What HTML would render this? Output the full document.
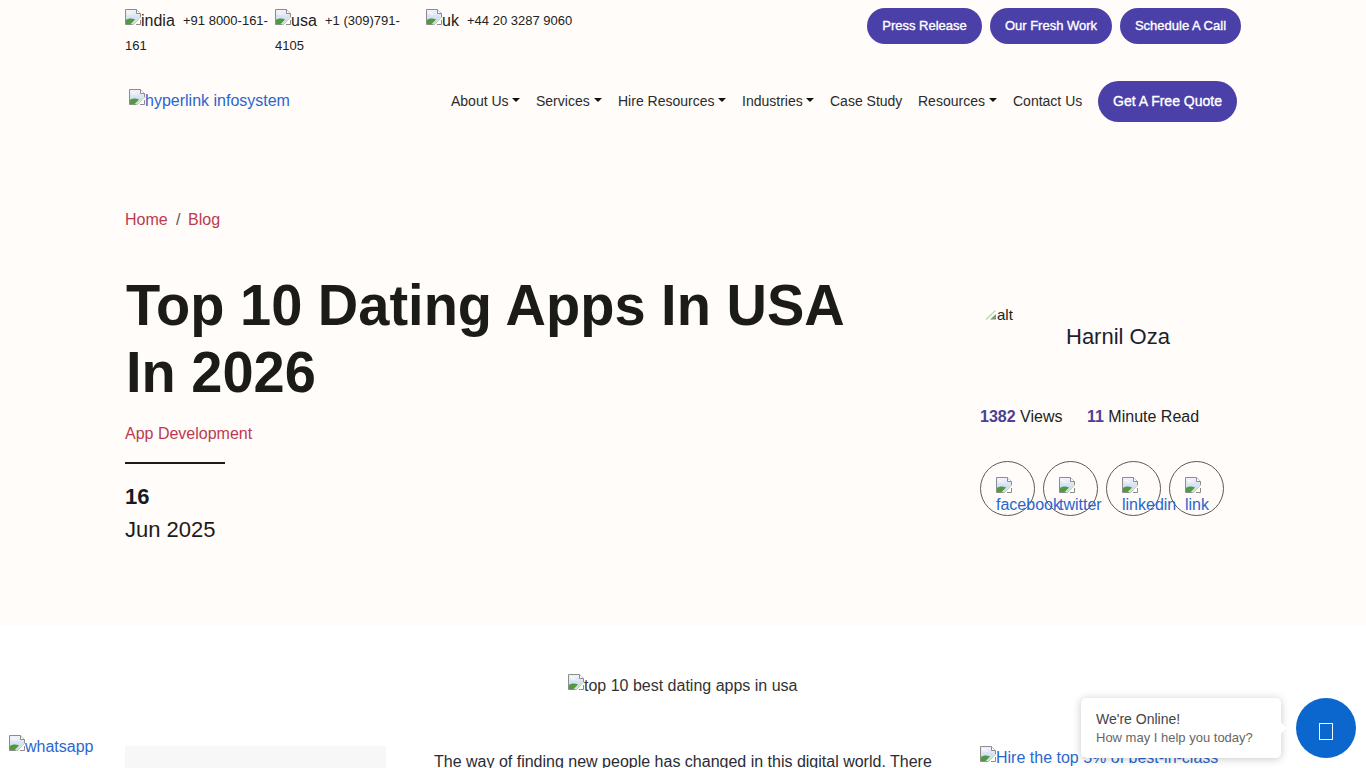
<!DOCTYPE html>
<html><head><meta charset="utf-8">
<style>
html,body{margin:0;padding:0;}
body{width:1366px;height:768px;overflow:hidden;position:relative;background:#fff;font-family:"Liberation Sans",sans-serif;color:#212529;}
.hero{position:absolute;left:0;top:0;width:1366px;height:626px;background:#fffcf9;}
.t{position:absolute;white-space:nowrap;line-height:1;}
.bi{position:absolute;width:16px;height:16px;}
.btn{position:absolute;background:#4a40a8;color:#fff;border-radius:20px;text-align:center;white-space:nowrap;-webkit-text-stroke:0.35px #fff;}
.nav{font-size:14px;color:#2b2b2b;}
.caret{position:absolute;width:0;height:0;border-top:4px solid #111;border-left:4px solid transparent;border-right:4px solid transparent;}
.red{color:#bc3a50;}
.blue{color:#2a66cf;}
.ttl{position:absolute;left:126px;white-space:nowrap;font-size:56px;font-weight:bold;line-height:67.2px;color:#1b1b18;transform:scaleY(1.03);transform-origin:0 54px;}
.circ{position:absolute;width:53px;height:53px;border:1px solid #5a5a5a;border-radius:50%;top:461px;}
</style></head>
<body>
<svg width="0" height="0" style="position:absolute">
<defs>
<linearGradient id="sky" x1="0" y1="0" x2="0" y2="1"><stop offset="0" stop-color="#f4f4fb"/><stop offset="1" stop-color="#bcd0ee"/></linearGradient>

</defs></svg>

<div class="hero"></div>

<!-- top bar -->
<svg class="bi" style="left:125px;top:9px" viewBox="0 0 16 16"><path d="M0.5 0.5H11.5L15.5 4.5V8.5L8.5 15.5H0.5Z" fill="url(#sky)" stroke="#8c8c8c"/>
<path d="M2 3.5H6M3 5H8" stroke="#fff" stroke-width="0.8" opacity="0.8"/>
<path d="M1 15V11C3 9.5 6.5 9 10 10.5L5.5 15Z" fill="#4f9a3c"/>
<path d="M7.5 15.5L15.5 8" stroke="#d6f0c4" stroke-width="1.2"/>
<path d="M11 15.5H15.5V11" fill="none" stroke="#8c8c8c"/>
<path d="M11.5 0.5V4.5H15.5" fill="#fff" stroke="#8c8c8c"/></svg>
<div class="t" style="left:141px;top:13px;font-size:16px;color:#222">india</div>
<div class="t" style="left:183px;top:14px;font-size:13px;color:#222">+91 8000-161-</div>
<div class="t" style="left:125px;top:39px;font-size:13px;color:#222">161</div>

<svg class="bi" style="left:275px;top:9px" viewBox="0 0 16 16"><path d="M0.5 0.5H11.5L15.5 4.5V8.5L8.5 15.5H0.5Z" fill="url(#sky)" stroke="#8c8c8c"/>
<path d="M2 3.5H6M3 5H8" stroke="#fff" stroke-width="0.8" opacity="0.8"/>
<path d="M1 15V11C3 9.5 6.5 9 10 10.5L5.5 15Z" fill="#4f9a3c"/>
<path d="M7.5 15.5L15.5 8" stroke="#d6f0c4" stroke-width="1.2"/>
<path d="M11 15.5H15.5V11" fill="none" stroke="#8c8c8c"/>
<path d="M11.5 0.5V4.5H15.5" fill="#fff" stroke="#8c8c8c"/></svg>
<div class="t" style="left:291px;top:13px;font-size:16px;color:#222">usa</div>
<div class="t" style="left:325px;top:14px;font-size:13px;color:#222">+1 (309)791-</div>
<div class="t" style="left:275px;top:39px;font-size:13px;color:#222">4105</div>

<svg class="bi" style="left:426px;top:9px" viewBox="0 0 16 16"><path d="M0.5 0.5H11.5L15.5 4.5V8.5L8.5 15.5H0.5Z" fill="url(#sky)" stroke="#8c8c8c"/>
<path d="M2 3.5H6M3 5H8" stroke="#fff" stroke-width="0.8" opacity="0.8"/>
<path d="M1 15V11C3 9.5 6.5 9 10 10.5L5.5 15Z" fill="#4f9a3c"/>
<path d="M7.5 15.5L15.5 8" stroke="#d6f0c4" stroke-width="1.2"/>
<path d="M11 15.5H15.5V11" fill="none" stroke="#8c8c8c"/>
<path d="M11.5 0.5V4.5H15.5" fill="#fff" stroke="#8c8c8c"/></svg>
<div class="t" style="left:442px;top:13px;font-size:16px;color:#222">uk</div>
<div class="t" style="left:467px;top:14px;font-size:13px;color:#222">+44 20 3287 9060</div>

<div class="btn" style="left:867px;top:8px;width:115px;height:36px;line-height:36px;font-size:13px">Press Release</div>
<div class="btn" style="left:990px;top:8px;width:122px;height:36px;line-height:36px;font-size:13px">Our Fresh Work</div>
<div class="btn" style="left:1120px;top:8px;width:121px;height:36px;line-height:36px;font-size:13px">Schedule A Call</div>

<!-- nav -->
<svg class="bi" style="left:129px;top:89px" viewBox="0 0 16 16"><path d="M0.5 0.5H11.5L15.5 4.5V8.5L8.5 15.5H0.5Z" fill="url(#sky)" stroke="#8c8c8c"/>
<path d="M2 3.5H6M3 5H8" stroke="#fff" stroke-width="0.8" opacity="0.8"/>
<path d="M1 15V11C3 9.5 6.5 9 10 10.5L5.5 15Z" fill="#4f9a3c"/>
<path d="M7.5 15.5L15.5 8" stroke="#d6f0c4" stroke-width="1.2"/>
<path d="M11 15.5H15.5V11" fill="none" stroke="#8c8c8c"/>
<path d="M11.5 0.5V4.5H15.5" fill="#fff" stroke="#8c8c8c"/></svg>
<div class="t blue" style="left:145px;top:93px;font-size:16px">hyperlink infosystem</div>

<div class="t nav" style="left:451px;top:94px">About Us</div><div class="caret" style="left:512px;top:98px"></div>
<div class="t nav" style="left:536px;top:94px">Services</div><div class="caret" style="left:594px;top:98px"></div>
<div class="t nav" style="left:618px;top:94px">Hire Resources</div><div class="caret" style="left:718px;top:98px"></div>
<div class="t nav" style="left:742px;top:94px">Industries</div><div class="caret" style="left:806px;top:98px"></div>
<div class="t nav" style="left:830px;top:94px">Case Study</div>
<div class="t nav" style="left:918px;top:94px">Resources</div><div class="caret" style="left:989px;top:98px"></div>
<div class="t nav" style="left:1013px;top:94px">Contact Us</div>
<div class="btn" style="left:1098px;top:81px;width:139px;height:41px;line-height:41px;font-size:14px;border-radius:21px">Get A Free Quote</div>

<!-- breadcrumb -->
<div class="t red" style="left:125px;top:212px;font-size:16px">Home</div>
<div class="t" style="left:176px;top:212px;font-size:16px;color:#555">/</div>
<div class="t red" style="left:188px;top:212px;font-size:16px">Blog</div>

<!-- title -->
<div class="ttl" style="top:272px">Top 10 Dating Apps In USA</div>
<div class="ttl" style="top:339.2px">In 2026</div>
<div class="t red" style="left:125px;top:426px;font-size:16px">App Development</div>
<div style="position:absolute;left:125px;top:462px;width:100px;height:2px;background:#1b1b1b"></div>
<div class="t" style="left:125px;top:486px;font-size:22px;font-weight:bold;color:#161a22">16</div>
<div class="t" style="left:125px;top:519px;font-size:22px;color:#1b1b1b">Jun 2025</div>

<!-- author -->
<svg style="position:absolute;left:984px;top:307px" width="14" height="14"><path d="M2 12.5L11.5 3.5" stroke="#b9d8b0" stroke-width="1.3"/><path d="M6 12.5L12 7V12.5Z" fill="#7a9a78"/></svg>
<div class="t" style="left:997px;top:307px;font-size:15px;color:#222">alt</div>
<div class="t" style="left:1066px;top:326px;font-size:22px;color:#1c1f2a">Harnil Oza</div>

<div class="t" style="left:980px;top:409px;font-size:16px;color:#222"><b style="color:#4a4096">1382</b> Views</div>
<div class="t" style="left:1087px;top:409px;font-size:16px;color:#222"><b style="color:#4a4096">11</b> Minute Read</div>

<div class="circ" style="left:980px"></div>
<div class="circ" style="left:1043px"></div>
<div class="circ" style="left:1106px"></div>
<div class="circ" style="left:1169px"></div>
<svg class="bi" style="left:996px;top:477px" viewBox="0 0 16 16"><path d="M0.5 0.5H11.5L15.5 4.5V8.5L8.5 15.5H0.5Z" fill="url(#sky)" stroke="#8c8c8c"/>
<path d="M2 3.5H6M3 5H8" stroke="#fff" stroke-width="0.8" opacity="0.8"/>
<path d="M1 15V11C3 9.5 6.5 9 10 10.5L5.5 15Z" fill="#4f9a3c"/>
<path d="M7.5 15.5L15.5 8" stroke="#d6f0c4" stroke-width="1.2"/>
<path d="M11 15.5H15.5V11" fill="none" stroke="#8c8c8c"/>
<path d="M11.5 0.5V4.5H15.5" fill="#fff" stroke="#8c8c8c"/></svg>
<svg class="bi" style="left:1059px;top:477px" viewBox="0 0 16 16"><path d="M0.5 0.5H11.5L15.5 4.5V8.5L8.5 15.5H0.5Z" fill="url(#sky)" stroke="#8c8c8c"/>
<path d="M2 3.5H6M3 5H8" stroke="#fff" stroke-width="0.8" opacity="0.8"/>
<path d="M1 15V11C3 9.5 6.5 9 10 10.5L5.5 15Z" fill="#4f9a3c"/>
<path d="M7.5 15.5L15.5 8" stroke="#d6f0c4" stroke-width="1.2"/>
<path d="M11 15.5H15.5V11" fill="none" stroke="#8c8c8c"/>
<path d="M11.5 0.5V4.5H15.5" fill="#fff" stroke="#8c8c8c"/></svg>
<svg class="bi" style="left:1122px;top:477px" viewBox="0 0 16 16"><path d="M0.5 0.5H11.5L15.5 4.5V8.5L8.5 15.5H0.5Z" fill="url(#sky)" stroke="#8c8c8c"/>
<path d="M2 3.5H6M3 5H8" stroke="#fff" stroke-width="0.8" opacity="0.8"/>
<path d="M1 15V11C3 9.5 6.5 9 10 10.5L5.5 15Z" fill="#4f9a3c"/>
<path d="M7.5 15.5L15.5 8" stroke="#d6f0c4" stroke-width="1.2"/>
<path d="M11 15.5H15.5V11" fill="none" stroke="#8c8c8c"/>
<path d="M11.5 0.5V4.5H15.5" fill="#fff" stroke="#8c8c8c"/></svg>
<svg class="bi" style="left:1185px;top:477px" viewBox="0 0 16 16"><path d="M0.5 0.5H11.5L15.5 4.5V8.5L8.5 15.5H0.5Z" fill="url(#sky)" stroke="#8c8c8c"/>
<path d="M2 3.5H6M3 5H8" stroke="#fff" stroke-width="0.8" opacity="0.8"/>
<path d="M1 15V11C3 9.5 6.5 9 10 10.5L5.5 15Z" fill="#4f9a3c"/>
<path d="M7.5 15.5L15.5 8" stroke="#d6f0c4" stroke-width="1.2"/>
<path d="M11 15.5H15.5V11" fill="none" stroke="#8c8c8c"/>
<path d="M11.5 0.5V4.5H15.5" fill="#fff" stroke="#8c8c8c"/></svg>
<div class="t blue" style="left:996px;top:497px;font-size:16px">facebook</div>
<div class="t blue" style="left:1059px;top:497px;font-size:16px">twitter</div>
<div class="t blue" style="left:1122px;top:497px;font-size:16px">linkedin</div>
<div class="t blue" style="left:1185px;top:497px;font-size:16px">link</div>

<!-- content -->
<svg class="bi" style="left:568px;top:674px" viewBox="0 0 16 16"><path d="M0.5 0.5H11.5L15.5 4.5V8.5L8.5 15.5H0.5Z" fill="url(#sky)" stroke="#8c8c8c"/>
<path d="M2 3.5H6M3 5H8" stroke="#fff" stroke-width="0.8" opacity="0.8"/>
<path d="M1 15V11C3 9.5 6.5 9 10 10.5L5.5 15Z" fill="#4f9a3c"/>
<path d="M7.5 15.5L15.5 8" stroke="#d6f0c4" stroke-width="1.2"/>
<path d="M11 15.5H15.5V11" fill="none" stroke="#8c8c8c"/>
<path d="M11.5 0.5V4.5H15.5" fill="#fff" stroke="#8c8c8c"/></svg>
<div class="t" style="left:584px;top:678px;font-size:16px;color:#333">top 10 best dating apps in usa</div>

<div style="position:absolute;left:125px;top:746px;width:261px;height:30px;background:#f7f7f7"></div>
<div class="t" style="left:434px;top:754px;font-size:16px;color:#2b2b33">The way of finding new people has changed in this digital world. There</div>

<svg class="bi" style="left:980px;top:746px" viewBox="0 0 16 16"><path d="M0.5 0.5H11.5L15.5 4.5V8.5L8.5 15.5H0.5Z" fill="url(#sky)" stroke="#8c8c8c"/>
<path d="M2 3.5H6M3 5H8" stroke="#fff" stroke-width="0.8" opacity="0.8"/>
<path d="M1 15V11C3 9.5 6.5 9 10 10.5L5.5 15Z" fill="#4f9a3c"/>
<path d="M7.5 15.5L15.5 8" stroke="#d6f0c4" stroke-width="1.2"/>
<path d="M11 15.5H15.5V11" fill="none" stroke="#8c8c8c"/>
<path d="M11.5 0.5V4.5H15.5" fill="#fff" stroke="#8c8c8c"/></svg>
<div class="t blue" style="left:996px;top:750px;font-size:16px">Hire the top 5% of best-in-class</div>

<!-- floating -->
<svg class="bi" style="left:9px;top:735px" viewBox="0 0 16 16"><path d="M0.5 0.5H11.5L15.5 4.5V8.5L8.5 15.5H0.5Z" fill="url(#sky)" stroke="#8c8c8c"/>
<path d="M2 3.5H6M3 5H8" stroke="#fff" stroke-width="0.8" opacity="0.8"/>
<path d="M1 15V11C3 9.5 6.5 9 10 10.5L5.5 15Z" fill="#4f9a3c"/>
<path d="M7.5 15.5L15.5 8" stroke="#d6f0c4" stroke-width="1.2"/>
<path d="M11 15.5H15.5V11" fill="none" stroke="#8c8c8c"/>
<path d="M11.5 0.5V4.5H15.5" fill="#fff" stroke="#8c8c8c"/></svg>
<div class="t blue" style="left:25px;top:739px;font-size:16px">whatsapp</div>

<div style="position:absolute;left:1081px;top:698px;width:200px;height:60px;background:#fff;border-radius:5px;box-shadow:0 1px 8px rgba(0,0,0,0.22)"></div>
<div style="position:absolute;left:1277px;top:724px;width:8px;height:8px;background:#fff;transform:rotate(45deg)"></div>
<div class="t" style="left:1096px;top:712px;font-size:14px;color:#444">We're Online!</div>
<div class="t" style="left:1096px;top:731px;font-size:13px;color:#666">How may I help you today?</div>
<div style="position:absolute;left:1296px;top:698px;width:60px;height:60px;border-radius:50%;background:#0b67cd"></div>
<div style="position:absolute;left:1319px;top:723px;width:11.5px;height:14.5px;border:1.5px solid #f4f8ff"></div>
</body></html>
